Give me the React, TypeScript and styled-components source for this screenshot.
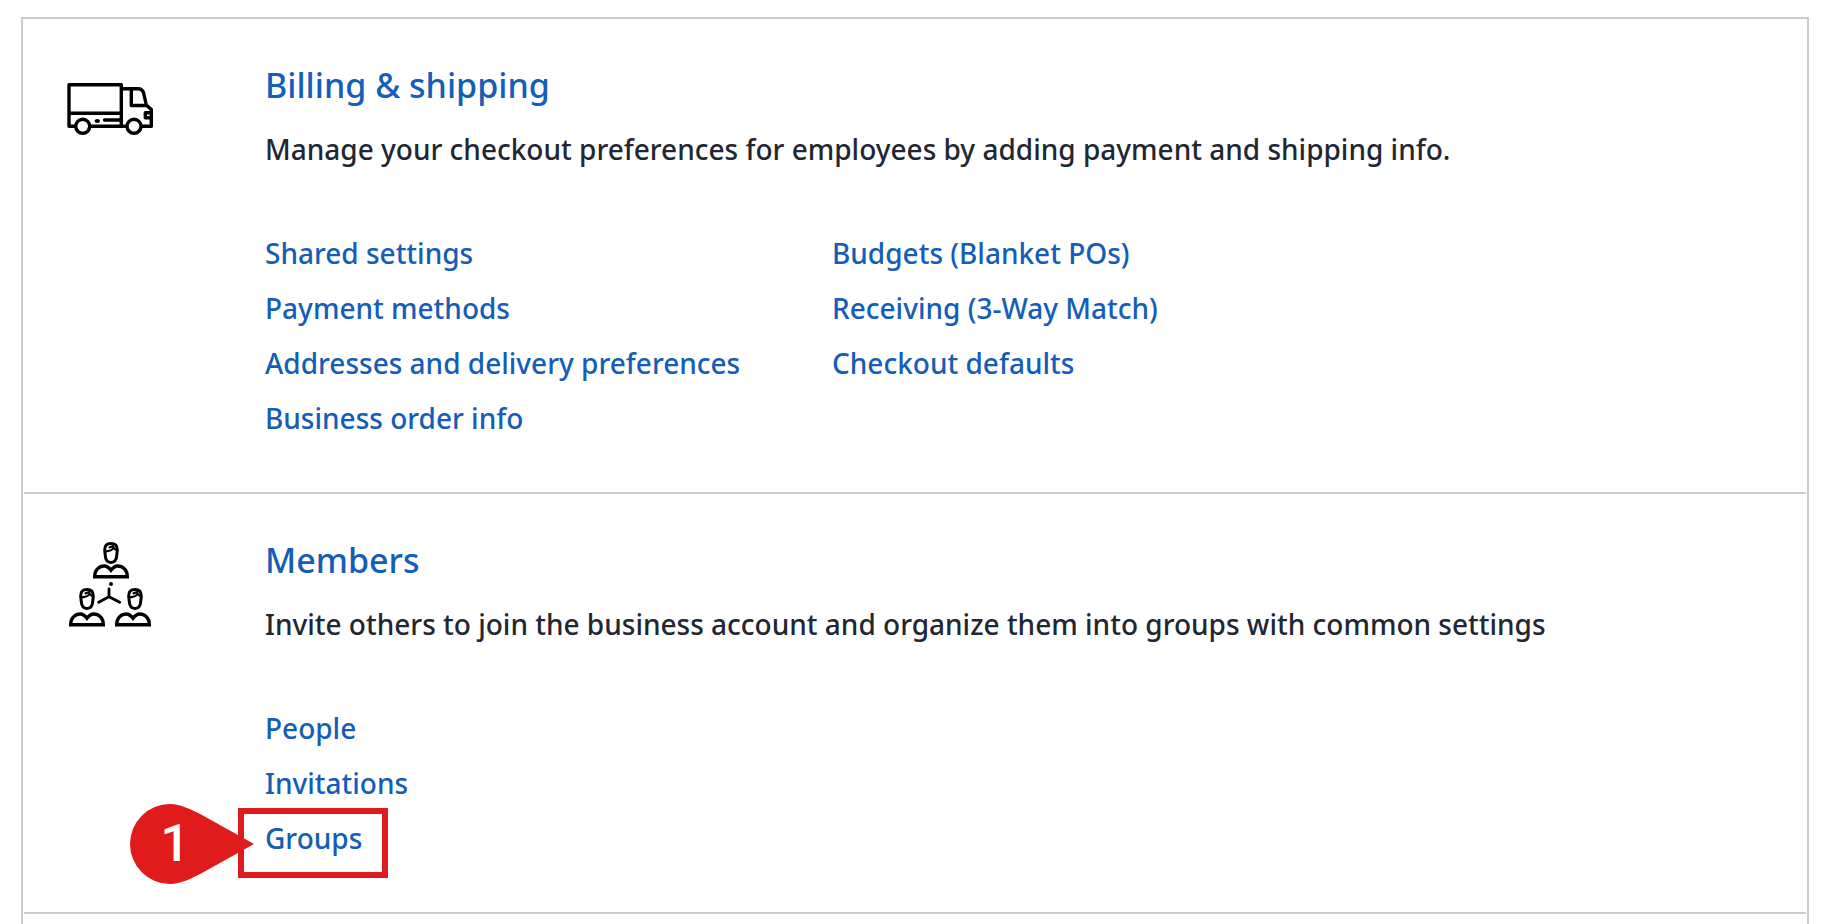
import React from "react";
import styled, { createGlobalStyle } from "styled-components";

const GlobalStyle = createGlobalStyle`
  *, *::before, *::after { box-sizing: border-box; }
  body {
    margin: 0;
    background: #ffffff;
    color: #1f2733;
    font-family: "Noto Sans", "Open Sans", sans-serif;
  }
`;

const Page = styled.main`
  display: flex;
  flex-direction: column;
  min-height: 100vh;
  padding: 17px 17px 0 21px;
`;

const Card = styled.div`
  flex: 1;
  border: 2px solid #cbcbd0;
  border-bottom: 0;
`;

const Section = styled.section`
  display: grid;
  grid-template-columns: 90px minmax(0, 1fr);
  column-gap: 110px;
  margin: 0 1px;
  padding: 45px 41px 46px;
  border-bottom: 2px solid #cbcbd0;
`;

const Icon = styled.svg`
  width: 90px;
  height: 90px;
  fill: none;
  stroke: #000000;
  stroke-width: 3.4;
  stroke-linecap: round;
  stroke-linejoin: round;
`;

const Title = styled.h2`
  margin: 0;
  font-size: 34px;
  font-weight: 500;
  line-height: 42px;
`;

const Description = styled.p`
  margin: 23px 0 57px;
  font-size: 28px;
  font-weight: 500;
  line-height: 40px;
`;

const LinkGrid = styled.div`
  display: grid;
  grid-template-columns: minmax(0, 567px) minmax(0, 1fr);
`;

const LinkList = styled.ul`
  margin: 0;
  padding: 0;
  list-style: none;
`;

const LinkItem = styled.li`
  position: relative;
  width: max-content;
  height: 55px;
  font-size: 28px;
  font-weight: 500;
  line-height: 55px;
`;

const Link = styled.a`
  color: #145db8;
  text-decoration: none;

  &:hover {
    text-decoration: underline;
  }
`;

const Highlight = styled.span`
  position: absolute;
  top: -3px;
  left: -27px;
  width: 150px;
  height: 70px;
  border: 6px solid #e01b1b;
  pointer-events: none;
`;

const Pin = styled.span`
  position: absolute;
  top: -7px;
  left: -135px;
  width: 124px;
  height: 80px;
  pointer-events: none;
`;

const PinShape = styled.svg`
  position: absolute;
  inset: 0;
  fill: #e01b1b;
`;

const PinNumber = styled.span`
  position: relative;
  display: block;
  width: 90px;
  color: #ffffff;
  font-family: Roboto, "Liberation Sans", sans-serif;
  font-size: 52px;
  font-weight: 500;
  line-height: 80px;
  text-align: center;
`;

function TruckIcon() {
  return (
    <Icon viewBox="0 0 90 90" aria-hidden="true">
      <path d="M10 62.3H4V20.7H56.3V62.3M4 49.3H56.3M25.5 62.3H61.5M56.3 24.7H73Q77.5 24.7 78.6 29L81.3 41L86.3 45.5V62.3H77M66.3 24.7V41.5H81.3M86.3 48.7H80.3V53.7H86.3" />
      <circle cx="17.7" cy="62.3" r="7" />
      <circle cx="69" cy="62.3" r="7" />
      <ellipse cx="32.3" cy="57" rx="2.7" ry="2" fill="#000000" stroke="none" />
      <path d="M39.5 56H55" />
    </Icon>
  );
}

function PersonHead({ x, y }: { x: number; y: number }) {
  return (
    <g transform={`translate(${x} ${y})`} strokeWidth="3">
      <path d="M-6.3 7C-6.3 1.5 -4 .6 0 .6S6.3 1.5 6.3 7L5.8 12C5.5 17 3.5 19.5 0 19.5S-5.5 17 -5.8 12Z" />
      <path strokeWidth="2.2" d="M-5.5 8.3C-2 8.2 1 7.4 2.6 5L5.5 7.2M-1.5 4.4L2.5 3" />
    </g>
  );
}

function PersonBody({ x, y }: { x: number; y: number }) {
  return (
    <path
      transform={`translate(${x} ${y})`}
      strokeLinejoin="miter"
      d="M-16.3 10.7C-16.3 3.5 -11.5 0 -6.5 0C-3.5 0 -2.2 1.5 0 4.3C2.2 1.5 3.5 0 6.5 0C11.5 0 16.3 3.5 16.3 10.7Z"
    />
  );
}

function MembersIcon() {
  return (
    <Icon viewBox="0 0 90 90" aria-hidden="true">
      <PersonHead x={46} y={4} />
      <PersonBody x={46} y={27} />
      <PersonHead x={22} y={50} />
      <PersonBody x={22} y={75} />
      <PersonHead x={70} y={50} />
      <PersonBody x={68} y={75} />
      <circle cx="46" cy="45" r="2" fill="#000000" stroke="none" />
      <path strokeWidth="2.8" d="M44 50V57.7L33.7 63.3M44 57.7L54.7 63.3" />
    </Icon>
  );
}

function StepMarker({ step }: { step: number }) {
  return (
    <>
      <Highlight />
      <Pin>
        <PinShape viewBox="0 0 124 80" width="124" height="80" aria-hidden="true">
          <path d="M40 0A40 40 0 0 0 40 80C51 80 62 74 72 69L124 40L72 11C62 6 51 0 40 0Z" />
        </PinShape>
        <PinNumber>{step}</PinNumber>
      </Pin>
    </>
  );
}

interface SectionData {
  title: string;
  description: string;
  icon: React.ReactNode;
  columns: string[][];
}

const sections: SectionData[] = [
  {
    title: "Billing & shipping",
    description:
      "Manage your checkout preferences for employees by adding payment and shipping info.",
    icon: <TruckIcon />,
    columns: [
      [
        "Shared settings",
        "Payment methods",
        "Addresses and delivery preferences",
        "Business order info",
      ],
      ["Budgets (Blanket POs)", "Receiving (3-Way Match)", "Checkout defaults"],
    ],
  },
  {
    title: "Members",
    description:
      "Invite others to join the business account and organize them into groups with common settings",
    icon: <MembersIcon />,
    columns: [["People", "Invitations", "Groups"]],
  },
];

const steps: Record<string, number> = { Groups: 1 };

export default function App() {
  return (
    <>
      <GlobalStyle />
      <Page>
        <Card>
          {sections.map((section) => (
            <Section key={section.title}>
              {section.icon}
              <div>
                <Title>
                  <Link href="#">{section.title}</Link>
                </Title>
                <Description>{section.description}</Description>
                <LinkGrid>
                  {section.columns.map((links, index) => (
                    <LinkList key={index}>
                      {links.map((label) => (
                        <LinkItem key={label}>
                          <Link href="#">{label}</Link>
                          {steps[label] && <StepMarker step={steps[label]} />}
                        </LinkItem>
                      ))}
                    </LinkList>
                  ))}
                </LinkGrid>
              </div>
            </Section>
          ))}
        </Card>
      </Page>
    </>
  );
}
